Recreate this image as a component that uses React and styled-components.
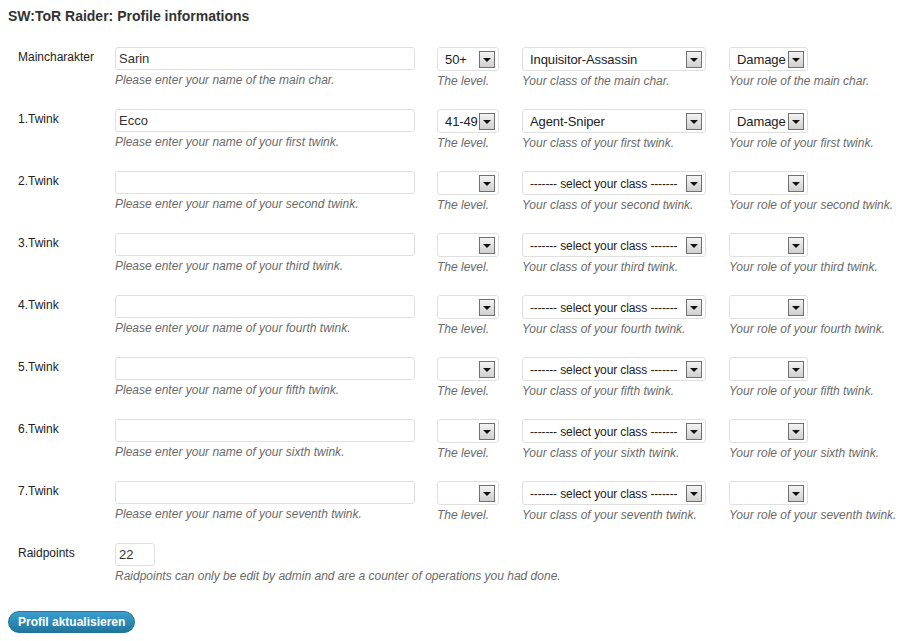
import React from 'react';
import styled, { createGlobalStyle } from 'styled-components';

const GlobalStyle = createGlobalStyle`
  html, body {
    margin: 0;
    background: #ffffff;
  }
  body {
    padding: 8px;
    font-family: "Liberation Sans", Arial, sans-serif;
    color: #333;
  }
`;

const Title = styled.h2`
  margin: 0;
  font-size: 14px;
  line-height: 17px;
  font-weight: bold;
  color: #333;
`;

const Form = styled.form`
  margin-top: 22px;
`;

const Row = styled.div`
  display: grid;
  grid-template-columns: 97px 322px 85px 207px 1fr;
  padding-left: 10px;
  height: 62px;
`;

const Label = styled.div`
  font-size: 12px;
  line-height: 15px;
  padding-top: 3px;
  color: #222;
`;

const Field = styled.div`
  display: flex;
  flex-direction: column;
  align-items: flex-start;
  grid-column: ${props => props.span || 'auto'};
`;

const TextInput = styled.input`
  box-sizing: border-box;
  width: ${props => props.width || '300px'};
  height: 23px;
  border: 1px solid #dfdfdf;
  border-radius: 3px;
  padding: 0 3px;
  font-family: "Liberation Sans", Arial, sans-serif;
  font-size: 13px;
  color: #333;
  background: #fff;
  outline: none;
`;

const Desc = styled.span`
  margin-top: 2px;
  font-size: 12px;
  line-height: 16px;
  font-style: italic;
  color: #6a6a6a;
  white-space: nowrap;
`;

const SelectBox = styled.div`
  box-sizing: border-box;
  width: ${props => props.width};
  height: 24px;
  border: 1px solid #dfdfdf;
  border-radius: 3px;
  background: #fff;
  display: flex;
  align-items: center;
  padding: 0 3px 0 7px;
  font-size: 13px;
  color: #222;
`;

const SelectText = styled.span`
  flex: 1;
  min-width: 0;
  white-space: nowrap;
  letter-spacing: -0.1px;
`;

const PlaceholderText = styled.span`
  font-size: 12px;
`;

const Dashes = styled.span`
  letter-spacing: -0.15px;
`;

const ArrowButton = styled.span`
  box-sizing: border-box;
  width: 16px;
  height: 17px;
  flex: none;
  border: 1px solid #707070;
  background: linear-gradient(#f4f4f4, #cfcfcf);
  display: flex;
  align-items: center;
  justify-content: center;
  &::after {
    content: '';
    border-left: 4px solid transparent;
    border-right: 4px solid transparent;
    border-top: 4px solid #111;
    margin-top: 1px;
  }
`;

const SubmitButton = styled.button`
  margin-top: 6px;
  height: 22px;
  padding: 0 9px;
  border: 1px solid #21759b;
  border-radius: 11px;
  background: linear-gradient(#3a9fd1, #21759b);
  color: #fff;
  font-family: "Liberation Sans", Arial, sans-serif;
  font-size: 12px;
  font-weight: bold;
  cursor: pointer;
`;

const Select = ({ width, children }) => (
  <SelectBox width={width}>
    <SelectText>{children}</SelectText>
    <ArrowButton />
  </SelectBox>
);

const Placeholder = () => (
  <PlaceholderText>
    <Dashes>-------</Dashes> select your class <Dashes>-------</Dashes>
  </PlaceholderText>
);

const chars = [
  { label: 'Maincharakter', name: 'Sarin', level: '50+', cls: 'Inquisitor-Assassin', role: 'Damage', of: 'the main char' },
  { label: '1.Twink', name: 'Ecco', level: '41-49', cls: 'Agent-Sniper', role: 'Damage', of: 'your first twink' },
  { label: '2.Twink', of: 'your second twink' },
  { label: '3.Twink', of: 'your third twink' },
  { label: '4.Twink', of: 'your fourth twink' },
  { label: '5.Twink', of: 'your fifth twink' },
  { label: '6.Twink', of: 'your sixth twink' },
  { label: '7.Twink', of: 'your seventh twink' },
];

export default function App() {
  return (
    <>
      <GlobalStyle />
      <Title>SW:ToR Raider: Profile informations</Title>
      <Form onSubmit={e => e.preventDefault()}>
        {chars.map(c => (
          <Row key={c.label}>
            <Label>{c.label}</Label>
            <Field>
              <TextInput defaultValue={c.name || ''} />
              <Desc>Please enter your name of {c.of}.</Desc>
            </Field>
            <Field>
              <Select width="62px">{c.level || ''}</Select>
              <Desc>The level.</Desc>
            </Field>
            <Field>
              <Select width="184px">{c.cls || <Placeholder />}</Select>
              <Desc>Your class of {c.of}.</Desc>
            </Field>
            <Field>
              <Select width="79px">{c.role || ''}</Select>
              <Desc>Your role of {c.of}.</Desc>
            </Field>
          </Row>
        ))}
        <Row>
          <Label>Raidpoints</Label>
          <Field span="2 / 6">
            <TextInput width="40px" defaultValue="22" />
            <Desc>Raidpoints can only be edit by admin and are a counter of operations you had done.</Desc>
          </Field>
        </Row>
        <SubmitButton type="submit">Profil aktualisieren</SubmitButton>
      </Form>
    </>
  );
}
